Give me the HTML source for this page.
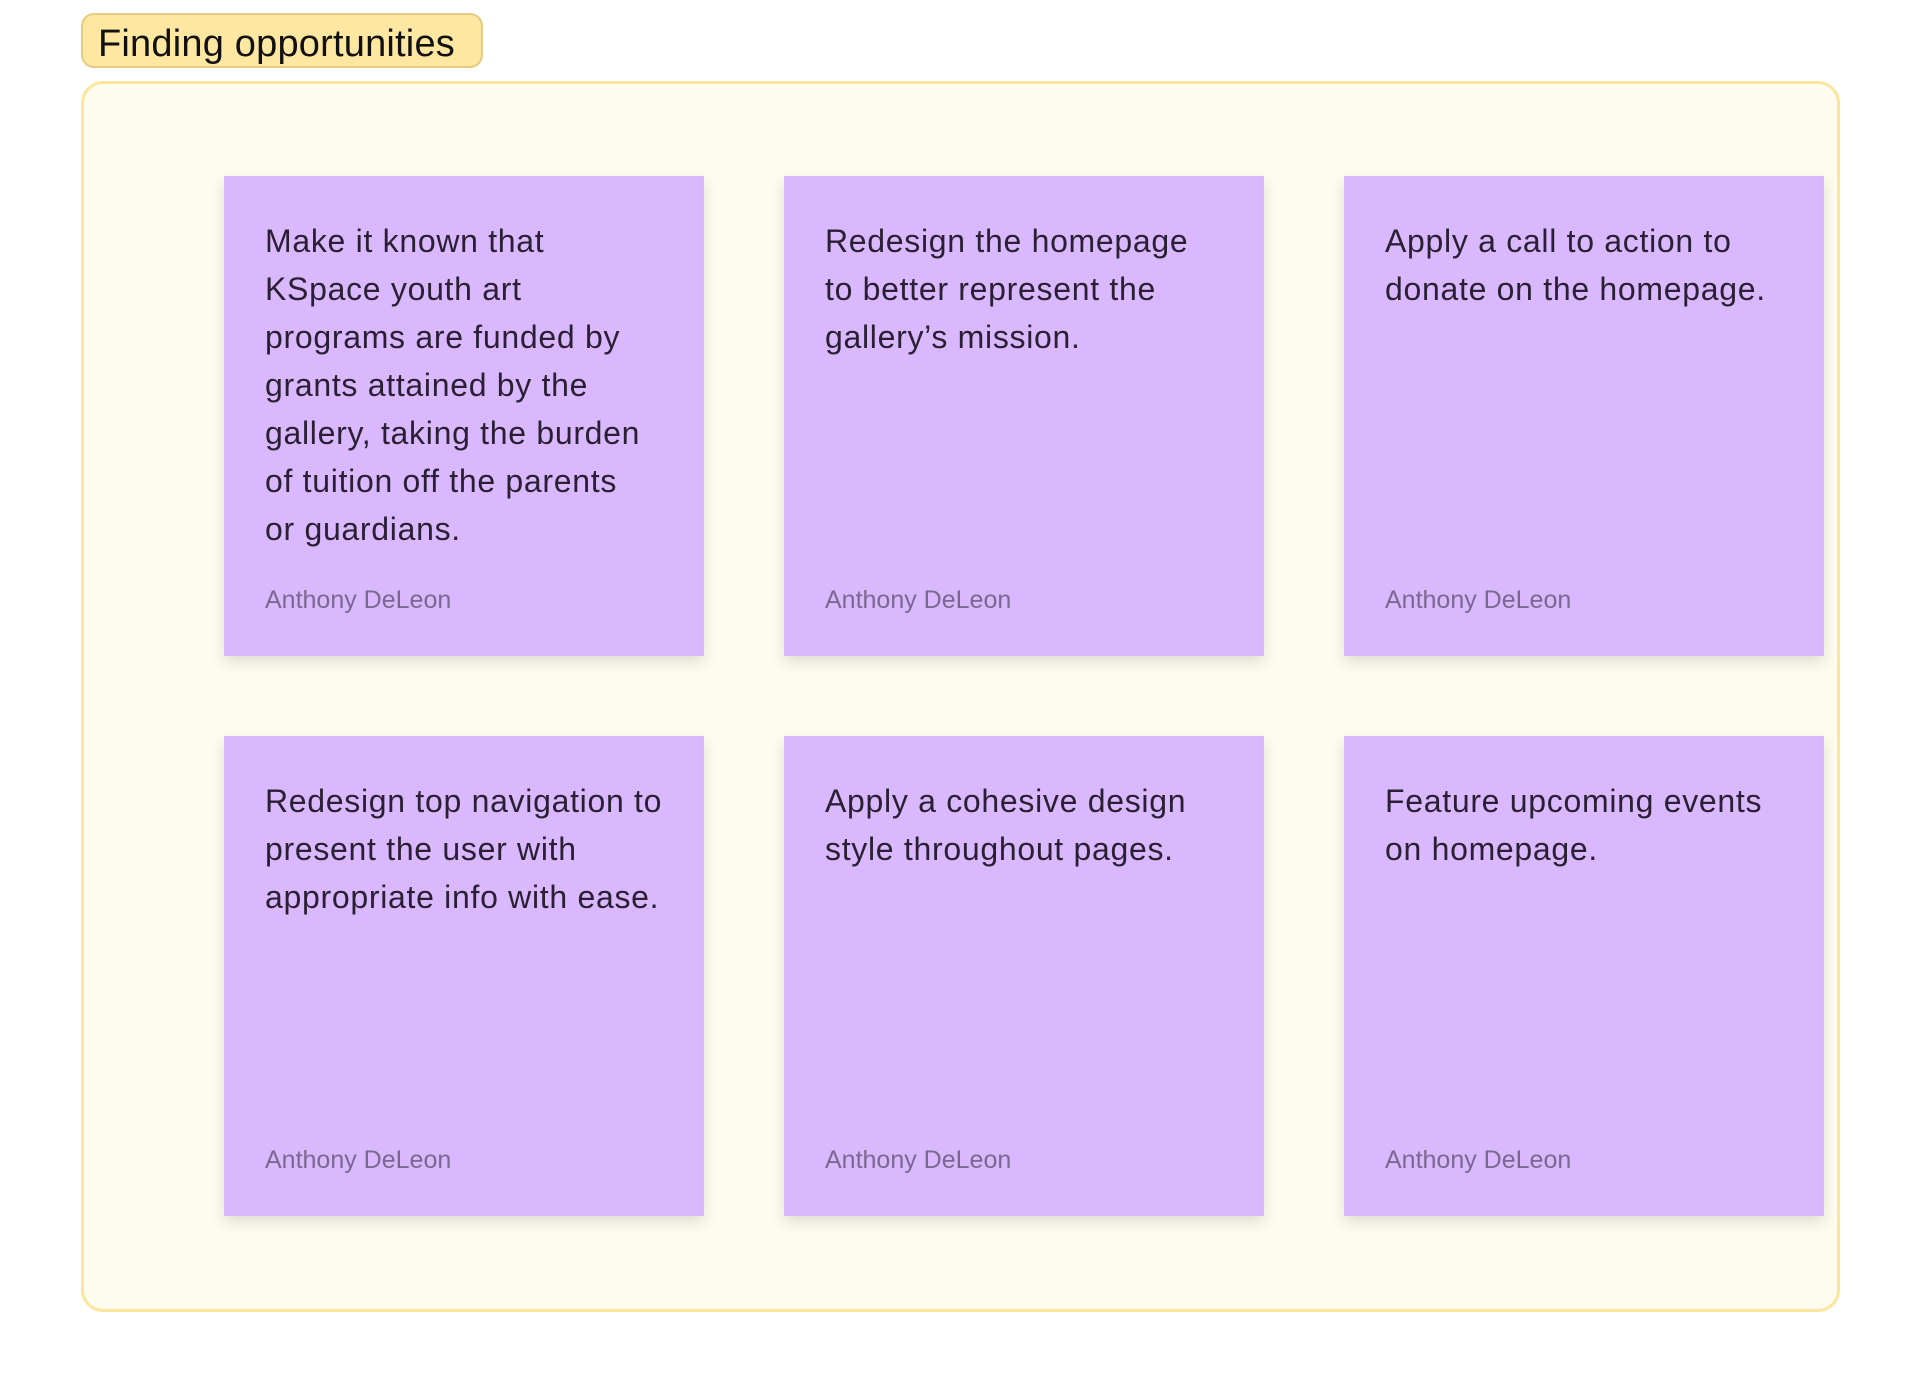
<!DOCTYPE html>
<html><head><meta charset="utf-8"><style>
html,body{margin:0;padding:0;background:#fff;width:1924px;height:1392px;overflow:hidden;font-family:"Liberation Sans",sans-serif;}
.label{position:absolute;left:81px;top:13px;width:402px;height:55px;box-sizing:border-box;background:#fee7a1;border:2px solid #e6cb85;border-radius:13px;font-size:38px;letter-spacing:0.2px;line-height:58px;padding-left:15px;color:#111;}
.frame{position:absolute;left:81px;top:81px;width:1759px;height:1231px;box-sizing:border-box;background:#fefcef;border:3px solid #fde59b;border-radius:22px;}
.card{position:absolute;width:480px;height:480px;background:#d9b8fd;box-shadow:0 6px 14px rgba(0,0,0,0.12);box-sizing:border-box;padding:41px 0 0 41px;}
.t{font-size:32px;letter-spacing:0.7px;line-height:48px;color:#2a1f33;white-space:nowrap;}
.a{position:absolute;left:41px;top:410px;font-size:25px;color:#7b6890;}
</style></head><body>
<div class="label">Finding opportunities</div>
<div class="frame"></div>
<div class="card" style="left:224px;top:176px"><div class="t">Make it known that<br>KSpace youth art<br>programs are funded by<br>grants attained by the<br>gallery, taking the burden<br>of tuition off the parents<br>or guardians.</div><div class="a">Anthony DeLeon</div></div>
<div class="card" style="left:784px;top:176px"><div class="t">Redesign the homepage<br>to better represent the<br>gallery’s mission.</div><div class="a">Anthony DeLeon</div></div>
<div class="card" style="left:1344px;top:176px"><div class="t">Apply a call to action to<br>donate on the homepage.</div><div class="a">Anthony DeLeon</div></div>
<div class="card" style="left:224px;top:736px"><div class="t">Redesign top navigation to<br>present the user with<br>appropriate info with ease.</div><div class="a">Anthony DeLeon</div></div>
<div class="card" style="left:784px;top:736px"><div class="t">Apply a cohesive design<br>style throughout pages.</div><div class="a">Anthony DeLeon</div></div>
<div class="card" style="left:1344px;top:736px"><div class="t">Feature upcoming events<br>on homepage.</div><div class="a">Anthony DeLeon</div></div>
</body></html>
